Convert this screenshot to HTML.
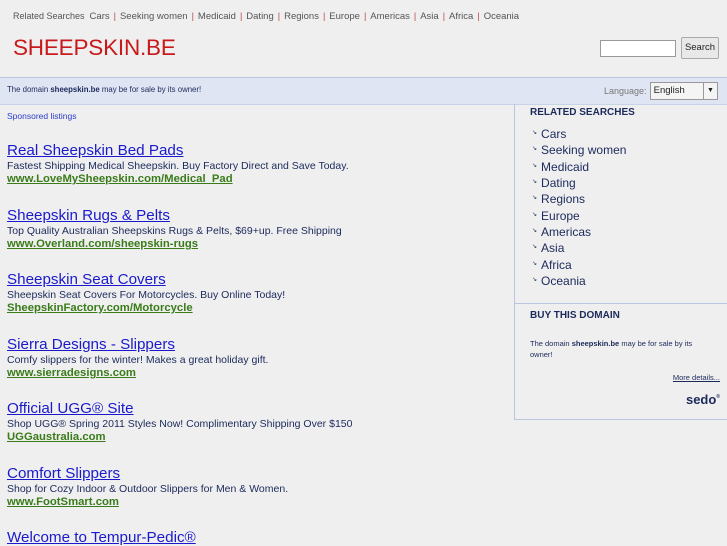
<!DOCTYPE html><html><head><style>
body{margin:0;background:#efefef;font-family:"Liberation Sans",Arial,sans-serif;width:727px;height:545px;overflow:hidden;position:relative}
.top{position:absolute;left:13px;top:11px;font-size:9px;color:#555}
.top a{color:#555;text-decoration:none;font-size:9.5px}
.top span{color:#b44;margin:0 4px}
.logo{position:absolute;left:13px;top:35px;font-size:22.5px;color:#c8191c;letter-spacing:-0.2px}
.sin{position:absolute;left:600px;top:40px;width:74px;height:15px;border:1px solid #999;background:#fff}
.sb{position:absolute;left:681px;top:37px;width:36px;height:20px;border:1px solid #aaa;border-radius:2px;background:#e8e8e8;font-size:9.5px;text-align:center;line-height:20px;color:#222}
.bar{position:absolute;left:0;top:77px;width:727px;height:26px;background:#dfe5f3;border-top:1px solid #b9c6df;border-bottom:1px solid #c8d2e8}
.bar .t{position:absolute;left:7px;top:7px;font-size:7.8px;color:#1c2a5c}
.lang{position:absolute;left:604px;top:8px;font-size:9px;color:#777}
.sel{position:absolute;left:650px;top:4px;width:66px;height:16px;border:1px solid #999;background:#f4f4f4;font-size:9.5px;line-height:16px;color:#222}
.sel i{position:absolute;right:0;top:0;width:13px;height:16px;border-left:1px solid #999;font-style:normal;font-size:7px;text-align:center}
.side{position:absolute;left:514px;top:104px;width:213px;height:315px;border-left:1px solid #b9c6df;border-bottom:1px solid #b9c6df}
.side h3{margin:0;font-size:10px;color:#1c2a5c;position:absolute;left:15px}
.side ul{position:absolute;left:17px;top:21px;margin:0;padding:0;list-style:none}
.side li{font-size:12px;color:#1c2a5c;height:16.35px;line-height:16px}
.side li:before{content:"\2198";font-size:6px;margin-right:4px;vertical-align:4px}
.hr{position:absolute;left:0;top:199px;width:213px;border-top:1px solid #b9c6df}
.sp{position:absolute;left:7px;top:111px;font-size:8.5px;color:#2a3ccc}
.ad{position:absolute;left:7px}
.ad a{display:block;font-size:15.2px;color:#1a1acc;text-decoration:underline;line-height:17px}
.ad p{margin:0;font-size:10.5px;color:#1c2a5c;line-height:14px}
.ad b{display:block;font-size:11.3px;color:#3a7b1a;text-decoration:underline;line-height:13px}
</style></head><body>
<div class="top">Related Searches&nbsp; <a>Cars</a><span>|</span><a>Seeking women</a><span>|</span><a>Medicaid</a><span>|</span><a>Dating</a><span>|</span><a>Regions</a><span>|</span><a>Europe</a><span>|</span><a>Americas</a><span>|</span><a>Asia</a><span>|</span><a>Africa</a><span>|</span><a>Oceania</a></div>
<div class="logo">SHEEPSKIN.BE</div>
<div class="sin"></div><div class="sb">Search</div>
<div class="bar"><div class="t">The domain <b>sheepskin.be</b> may be for sale by its owner!</div><div class="lang">Language:</div><div class="sel">&nbsp;English<i>▼</i></div></div>
<div class="side">
<h3 style="top:3px">RELATED SEARCHES</h3>
<ul><li>Cars</li><li>Seeking women</li><li>Medicaid</li><li>Dating</li><li>Regions</li><li>Europe</li><li>Americas</li><li>Asia</li><li>Africa</li><li>Oceania</li></ul>
<div class="hr"></div>
<h3 style="top:206px">BUY THIS DOMAIN</h3>
<div style="position:absolute;left:15px;top:234px;font-size:7.5px;color:#1c2a5c;width:180px;line-height:11px">The domain <b>sheepskin.be</b> may be for sale by its owner!</div>
<div style="position:absolute;right:8px;top:269px;font-size:7.5px;color:#1c2a5c;text-decoration:underline">More details...</div>
<div style="position:absolute;right:8px;top:288px;font-size:13px;font-weight:bold;color:#1c2a5c">sedo<span style="font-size:5px;vertical-align:6px">®</span></div>
</div>
<div class="sp">Sponsored listings</div>
<div class="ad" style="top:142px"><a>Real Sheepskin Bed Pads</a><p>Fastest Shipping Medical Sheepskin. Buy Factory Direct and Save Today.</p><b>www.LoveMySheepskin.com/Medical_Pad</b></div>
<div class="ad" style="top:207px"><a>Sheepskin Rugs &amp; Pelts</a><p>Top Quality Australian Sheepskins Rugs &amp; Pelts, $69+up. Free Shipping</p><b>www.Overland.com/sheepskin-rugs</b></div>
<div class="ad" style="top:271px"><a>Sheepskin Seat Covers</a><p>Sheepskin Seat Covers For Motorcycles. Buy Online Today!</p><b>SheepskinFactory.com/Motorcycle</b></div>
<div class="ad" style="top:336px"><a>Sierra Designs - Slippers</a><p>Comfy slippers for the winter! Makes a great holiday gift.</p><b>www.sierradesigns.com</b></div>
<div class="ad" style="top:400px"><a>Official UGG® Site</a><p>Shop UGG® Spring 2011 Styles Now! Complimentary Shipping Over $150</p><b>UGGaustralia.com</b></div>
<div class="ad" style="top:465px"><a>Comfort Slippers</a><p>Shop for Cozy Indoor &amp; Outdoor Slippers for Men &amp; Women.</p><b>www.FootSmart.com</b></div>
<div class="ad" style="top:529px"><a>Welcome to Tempur-Pedic®</a></div>
</body></html>
